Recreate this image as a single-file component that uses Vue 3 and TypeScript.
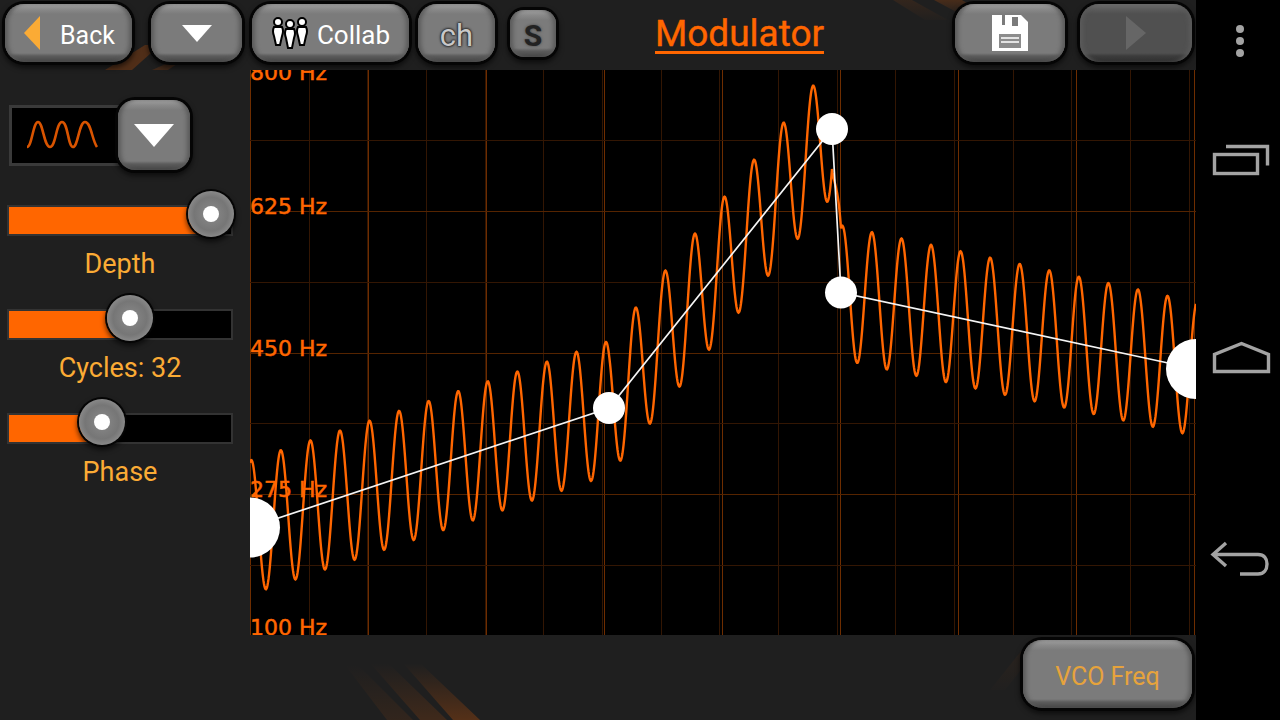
<script setup lang="ts">
const W = 946
const H = 565
const nodes: [number, number][] = [[0, 457.5], [359, 338], [582, 59], [591, 222.5], [946, 299]]

function centre(x: number): number {
  for (let i = 0; i < nodes.length - 1; i++) {
    const [x0, y0] = nodes[i]
    const [x1, y1] = nodes[i + 1]
    if (x <= x1) return y0 + ((y1 - y0) * (x - x0)) / (x1 - x0)
  }
  return nodes[nodes.length - 1][1]
}

let wave = ''
for (let x = 0; x <= W; x += 0.5) {
  const y = centre(x) - 67 * Math.cos(((x - 1.2) / 29.56) * Math.PI * 2)
  wave += (x === 0 ? 'M' : 'L') + x.toFixed(1) + ' ' + y.toFixed(1)
}
const envelope = nodes.map((n) => n.join(',')).join(' ')
const radii = [30, 16, 16, 16, 30]

const minorV = Array.from({ length: 17 }, (_, i) => Math.round(i * 58.67) + 0.5)
const majorV = Array.from({ length: 9 }, (_, i) => i * 118 + 0.5)
const minorH = [70.5, 212.5, 353.5, 495.5]
const majorH = [141.5, 283.5, 424.5]
const freqs = [
  { t: '800 Hz', y: 10 },
  { t: '625 Hz', y: 144 },
  { t: '450 Hz', y: 286 },
  { t: '275 Hz', y: 427 },
  { t: '100 Hz', y: 565 },
]
const sliders = [
  { label: 'Depth', fill: 204, knob: 202, top: -16 },
  { label: 'Cycles: 32', fill: 108, knob: 121, top: -16 },
  { label: 'Phase', fill: 80, knob: 93, top: -16 },
]
</script>

<template>
  <div class="screen">
    <div class="app">
      <svg class="decor" width="1196" height="720" viewBox="0 0 1196 720">
        <defs>
          <linearGradient id="fadeDown" x1="0" y1="0" x2="0" y2="1">
            <stop offset="0" stop-color="#ff6600" stop-opacity="0" />
            <stop offset="1" stop-color="#ff6600" stop-opacity="0.24" />
          </linearGradient>
          <linearGradient id="fadeUp" x1="0" y1="1" x2="0" y2="0">
            <stop offset="0" stop-color="#ff6600" stop-opacity="0.03" />
            <stop offset="1" stop-color="#ff6600" stop-opacity="0.18" />
          </linearGradient>
        </defs>
        <polygon points="345,665 358,665 413,720 387,720" fill="url(#fadeDown)" opacity="0.35" />
        <polygon points="370,663 388,663 447,720 420,720" fill="url(#fadeDown)" opacity="0.6" />
        <polygon points="403,663 420,663 480,720 453,720" fill="url(#fadeDown)" />
        <polygon points="145,45 160,45 132,70 105,70" fill="#ff6600" opacity="0.22" />
        <polygon points="170,62 180,62 168,70 152,70" fill="#ff6600" opacity="0.15" />
        <polygon points="893,0 912,0 948,20 925,20" fill="url(#fadeUp)" opacity="0.5" />
        <polygon points="934,0 962,0 985,14 960,14" fill="url(#fadeUp)" />
        <polygon points="1030,640 1045,640 1005,690 990,690" fill="url(#fadeUp)" opacity="0.3" />
      </svg>

      <header class="topbar">
        <button class="btn back">
          <svg width="18" height="34" viewBox="0 0 18 34"><polygon points="0,17 16,0 16,34" fill="#fbab35" /></svg>
          <span>Back</span>
        </button>
        <button class="btn drop">
          <svg width="30" height="17" viewBox="0 0 30 17"><polygon points="0,0 30,0 15,17" fill="#fff" /></svg>
        </button>
        <button class="btn collab">
          <svg width="38" height="34" viewBox="0 0 38 34">
            <g fill="#fff" stroke="#000" stroke-width="2">
              <circle cx="7" cy="6" r="4" />
              <path d="M3 11h8q2 4 0 9l-2 9H5l-2-9q-2-5 0-9z" />
              <circle cx="31" cy="6" r="4" />
              <path d="M27 11h8q2 4 0 9l-2 9h-4l-2-9q-2-5 0-9z" />
              <circle cx="19" cy="8" r="4" />
              <path d="M15 13h8q2 4 0 9l-2 10h-4l-2-10q-2-5 0-9z" />
            </g>
          </svg>
          <span>Collab</span>
        </button>
        <button class="btn ch"><span>ch</span></button>
        <button class="btn solo"><span>S</span></button>
        <h1 class="title"><span>Modulator</span></h1>
        <button class="btn save">
          <svg width="36" height="36" viewBox="0 0 36 36">
            <path fill="#fff" d="M0 0h29l7 7v29H0z" />
            <rect x="10" y="0" width="3" height="10" fill="#7b7b7b" />
            <rect x="20" y="2" width="6" height="9" fill="#7b7b7b" />
            <rect x="7" y="19" width="22" height="14" fill="#8c8c8c" />
            <path d="M9 23h18M9 27h18" stroke="#fff" stroke-width="1.6" />
          </svg>
        </button>
        <button class="btn next">
          <svg width="20" height="34" viewBox="0 0 20 34"><polygon points="0,0 20,17 0,34" fill="#666" /></svg>
        </button>
      </header>

      <main class="middle">
        <aside class="side">
          <div class="selector">
            <div class="wavebox">
              <svg width="74" height="30" viewBox="0 0 74 30">
                <path d="M1 27C6 27 7 2 12 2S18 27 24 27 30 2 36 2 42 27 47 27 53 2 59 2 66 20 71 27" fill="none" stroke="#d95400" stroke-width="2.6" />
              </svg>
            </div>
            <button class="btn square">
              <svg width="40" height="23" viewBox="0 0 40 23"><polygon points="0,0 40,0 20,23" fill="#fff" /></svg>
            </button>
          </div>
          <div v-for="s in sliders" :key="s.label" class="slider">
            <div class="track">
              <div class="fill" :style="{ width: s.fill + 'px' }"></div>
              <div class="knob" :style="{ left: s.knob - 23 + 'px', top: s.top + 'px' }"><i></i></div>
            </div>
            <div class="label">{{ s.label }}</div>
          </div>
        </aside>

        <svg class="graph" :width="W" :height="H" :viewBox="`0 0 ${W} ${H}`">
          <rect :width="W" :height="H" fill="#000" />
          <line v-for="x in minorV" :key="'a' + x" :x1="x" :x2="x" y1="0" :y2="H" stroke="#331603" />
          <line v-for="x in majorV" :key="'b' + x" :x1="x" :x2="x" y1="0" :y2="H" stroke="#6e2d00" />
          <line v-for="y in minorH" :key="'c' + y" x1="0" :x2="W" :y1="y" :y2="y" stroke="#331603" />
          <line v-for="y in majorH" :key="'d' + y" x1="0" :x2="W" :y1="y" :y2="y" stroke="#552400" />
          <text v-for="f in freqs" :key="f.t" x="77" :y="f.y" class="freq" text-anchor="end">{{ f.t }}</text>
          <path :d="wave" fill="none" stroke="#ff6600" stroke-width="2.4" />
          <polyline :points="envelope" fill="none" stroke="#f4f4f4" stroke-width="1.7" />
          <circle v-for="(n, i) in nodes" :key="i" :cx="n[0]" :cy="n[1]" :r="radii[i]" fill="#fff" />
        </svg>
      </main>

      <footer class="bottom">
        <button class="btn vco"><span>VCO Freq</span></button>
      </footer>
    </div>

    <nav class="navbar">
      <svg width="84" height="720" viewBox="0 0 84 720">
        <g fill="#a3a3a3">
          <circle cx="44" cy="29" r="4" />
          <circle cx="44" cy="41" r="4" />
          <circle cx="44" cy="53" r="4" />
        </g>
        <g fill="none" stroke="#a3a3a3" stroke-width="3.4">
          <rect x="18.500" y="154.500" width="43" height="19" />
          <path d="M30 146.500h41.500v19" />
          <path d="M18.500 371.500v-17l27-11 27 11v17z" />
          <path d="M30 543l-13 11.500 13 11.500" />
          <path d="M18 554.500h44c6 0 9 4 9 9.500s-3 10-9 10H44" />
        </g>
      </svg>
    </nav>
  </div>
</template>

<style scoped>
.screen {
  display: flex;
  width: 1280px;
  height: 720px;
  overflow: hidden;
  background: #000;
  font-family: "Roboto", "Liberation Sans", sans-serif;
}
.app {
  position: relative;
  display: flex;
  flex-direction: column;
  width: 1196px;
  height: 720px;
  background: #1f1f1f;
}
.decor {
  position: absolute;
  left: 0;
  top: 0;
}
.navbar {
  width: 84px;
  height: 720px;
}
.navbar svg {
  display: block;
}
.topbar {
  position: relative;
  display: flex;
  align-items: center;
  height: 70px;
  padding: 0 4px 4px 5px;
  box-sizing: border-box;
}
.btn {
  display: flex;
  align-items: center;
  justify-content: center;
  flex: none;
  height: 58px;
  padding: 0;
  border: 0;
  border-radius: 19px;
  font-family: inherit;
  background: linear-gradient(#a0a0a0 0, #8a8a8a 5px, #7b7b7b 10px, #7b7b7b calc(100% - 9px), #5c5c5c calc(100% - 6px), #444 100%);
  box-shadow: 0 0 0 3px #050505, 0 3px 5px 3px rgba(0, 0, 0, 0.55), inset 5px 0 4px -2px #5a5a5a, inset -5px 0 4px -2px #5a5a5a;
}
.btn span {
  position: relative;
  top: 2px;
}
.back {
  width: 127px;
  gap: 18px;
  color: #fff;
  font-size: 25px;
  justify-content: flex-start;
  padding-left: 19px;
  box-sizing: border-box;
}
.drop {
  width: 91px;
  margin-left: 19px;
}
.collab {
  width: 157px;
  margin-left: 10px;
  gap: 8px;
  color: #fff;
  font-size: 26px;
}
.ch {
  width: 77px;
  margin-left: 9px;
  color: #c8c8c8;
  font-size: 31px;
  text-shadow: 0 0 2px #222, 0 0 2px #222, 0 0 3px #222;
}
.solo {
  width: 46px;
  height: 47px;
  margin-left: 15px;
  border-radius: 14px;
  color: #222;
  font-size: 30px;
  font-weight: 700;
  text-shadow: 0 0 3px #444;
}
.title {
  flex: 1;
  margin: 0;
  padding: 3px 32px 0 0;
  text-align: center;
  font-size: 37px;
  font-weight: 400;
  line-height: 1;
  color: #ff6600;
  -webkit-text-stroke: 0.4px #ff6600;
}
.title span {
  display: inline-block;
  line-height: 34px;
  border-bottom: 3px solid #ff6600;
}
.save {
  width: 110px;
}
.next {
  width: 112px;
  margin-left: 15px;
  background: linear-gradient(#707070 0, #5c5c5c 5px, #505050 10px, #505050 calc(100% - 9px), #3c3c3c calc(100% - 6px), #2e2e2e 100%);
}
.middle {
  position: relative;
  display: flex;
  height: 565px;
}
.side {
  display: flex;
  flex-direction: column;
  width: 250px;
  padding: 30px 0 0 7px;
  box-sizing: border-box;
}
.selector {
  display: flex;
  align-items: center;
  height: 70px;
  margin-bottom: 35px;
  padding-left: 2px;
}
.wavebox {
  display: flex;
  align-items: center;
  width: 116px;
  height: 61px;
  padding-left: 14px;
  box-sizing: border-box;
  background: #000;
  border: 3px solid #3a3a3a;
}
.square {
  width: 72px;
  height: 70px;
  margin-left: -7px;
  position: relative;
  border-radius: 17px;
}
.slider {
  width: 226px;
  height: 104px;
}
.track {
  position: relative;
  width: 226px;
  height: 31px;
  box-sizing: border-box;
  background: #000;
  border: 2px solid #333;
}
.fill {
  height: 100%;
  background: #ff6600;
}
.knob {
  position: absolute;
  display: flex;
  align-items: center;
  justify-content: center;
  width: 46px;
  height: 46px;
  border-radius: 50%;
  background: radial-gradient(circle, #8a8a8a 0, #767676 52%, #888 70%, #4e4e4e 100%);
  box-shadow: 0 0 0 2px #050505, 0 3px 5px 2px rgba(0, 0, 0, 0.6);
}
.knob i {
  width: 16px;
  height: 16px;
  border-radius: 50%;
  background: #fff;
}
.label {
  margin-top: 13px;
  text-align: center;
  font-size: 27px;
  line-height: 30px;
  color: #fbab35;
}
.graph {
  display: block;
  flex: none;
}
.freq {
  font-family: "DejaVu Sans", sans-serif;
  font-size: 22px;
  fill: #ff6600;
  stroke: #ff6600;
  stroke-width: 0.5px;
}
.bottom {
  position: relative;
  display: flex;
  justify-content: flex-end;
  height: 85px;
  padding: 5px 4px 0 0;
  box-sizing: border-box;
}
.vco {
  width: 169px;
  height: 68px;
  color: #e6a33c;
  font-size: 25px;
}
</style>
